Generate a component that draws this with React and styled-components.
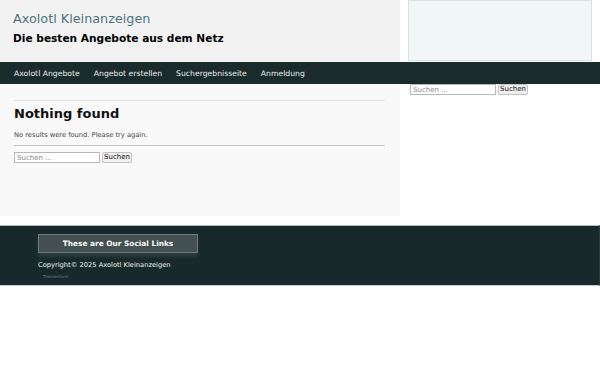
import styled, { createGlobalStyle } from "styled-components";

const GlobalStyle = createGlobalStyle`
  body {
    margin: 0;
    background: #ffffff;
    font-family: "DejaVu Sans", Verdana, sans-serif;
  }
`;

const navLinks = [
  "Axolotl Angebote",
  "Angebot erstellen",
  "Suchergebnisseite",
  "Anmeldung",
];

function SearchForm() {
  return (
    <Form onSubmit={(e) => e.preventDefault()}>
      <SearchInput type="search" placeholder="Suchen ..." />
      <SearchButton type="submit">Suchen</SearchButton>
    </Form>
  );
}

export default function App() {
  return (
    <Page>
      <GlobalStyle />
      <HeaderRow>
        <Branding>
          <SiteTitle>Axolotl Kleinanzeigen</SiteTitle>
          <Tagline>Die besten Angebote aus dem Netz</Tagline>
        </Branding>
        <HeaderWidget />
      </HeaderRow>

      <Nav>
        {navLinks.map((link) => (
          <NavLink key={link}>{link}</NavLink>
        ))}
      </Nav>

      <ContentRow>
        <Main>
          <Divider />
          <Heading>Nothing found</Heading>
          <Message>No results were found. Please try again.</Message>
          <Divider $dark />
          <SearchForm />
        </Main>
        <Sidebar>
          <SearchForm />
        </Sidebar>
      </ContentRow>

      <Footer>
        <FooterInner>
          <SocialButton>These are Our Social Links</SocialButton>
          <Copyright>Copyright© 2025 Axolotl Kleinanzeigen</Copyright>
          <Credit>Themenforst</Credit>
        </FooterInner>
      </Footer>
    </Page>
  );
}

const Page = styled.div`
  width: 600px;
`;

const HeaderRow = styled.div`
  display: flex;
  align-items: flex-start;
`;

const Branding = styled.div`
  width: 400px;
  height: 62px;
  box-sizing: border-box;
  padding: 11px 13px 0;
  background: #f2f2f2;
`;

const SiteTitle = styled.div`
  font-size: 12.8px;
  line-height: 16px;
  color: #4e7482;
`;

const Tagline = styled.div`
  margin-top: 4px;
  font-size: 10.6px;
  line-height: 14px;
  font-weight: bold;
  color: #000000;
`;

const HeaderWidget = styled.div`
  margin-left: 8px;
  width: 184px;
  height: 61px;
  box-sizing: border-box;
  border: 1px solid #dce3e3;
  background: #f1f7f7;
`;

const Nav = styled.nav`
  height: 22px;
  display: flex;
  align-items: center;
  padding-left: 7px;
  background: #1a2b2b;
`;

const NavLink = styled.a`
  padding: 0 7px;
  font-size: 7.7px;
  color: #e8eeee;
  cursor: pointer;
`;

const ContentRow = styled.div`
  display: flex;
  align-items: flex-start;
`;

const Main = styled.main`
  width: 400px;
  height: 132px;
  box-sizing: border-box;
  padding: 16px 15px 0 14px;
  background: #f9f9f9;
`;

const Divider = styled.hr`
  margin: 0;
  border: none;
  border-top: 1px solid ${(p) => (p.$dark ? "#c4c4c4" : "#e4e4e4")};
`;

const Heading = styled.h1`
  margin: 5px 0 0;
  font-size: 13px;
  line-height: 16px;
  font-weight: bold;
  color: #111111;
`;

const Message = styled.p`
  margin: 8px 0 5px;
  font-size: 6.7px;
  line-height: 10px;
  color: #444444;
`;

const Form = styled.form`
  display: flex;
  align-items: center;
  gap: 2px;
  margin-top: 6px;
`;

const SearchInput = styled.input`
  width: 86px;
  height: 11px;
  box-sizing: border-box;
  padding: 0 2px;
  border: 1px solid #b8b8b8;
  background: #ffffff;
  font-family: "DejaVu Sans", sans-serif;
  font-size: 7px;
  &::placeholder {
    color: #8a8a8a;
  }
`;

const SearchButton = styled.button`
  height: 11px;
  box-sizing: border-box;
  padding: 0 1px;
  border: 1px solid #c4c4c4;
  border-radius: 2px;
  background: #efefef;
  font-family: "DejaVu Sans", sans-serif;
  font-size: 7px;
  line-height: 9px;
  color: #111111;
`;

const Sidebar = styled.aside`
  padding-left: 10px;
  margin-top: -6px;
`;

const Footer = styled.footer`
  margin-top: 9px;
  height: 61px;
  box-sizing: border-box;
  border-top: 1px solid #b4baba;
  border-bottom: 1px solid #c4caca;
  border-right: 1px solid #2c3a3a;
  background: #17292a;
`;

const FooterInner = styled.div`
  padding: 8px 0 0 38px;
`;

const SocialButton = styled.div`
  width: 160px;
  height: 19px;
  box-sizing: border-box;
  display: flex;
  align-items: center;
  justify-content: center;
  border: 1px solid #6e7c7d;
  background: #434f51;
  box-shadow: 0 4px 3px rgba(80, 95, 97, 0.35);
  font-size: 7.4px;
  font-weight: bold;
  color: #ffffff;
`;

const Copyright = styled.div`
  margin-top: 7px;
  font-size: 6.7px;
  line-height: 10px;
  color: #f0f4f4;
`;

const Credit = styled.div`
  margin: 4px 0 0 5px;
  font-size: 4px;
  line-height: 6px;
  color: #6f8888;
`;
